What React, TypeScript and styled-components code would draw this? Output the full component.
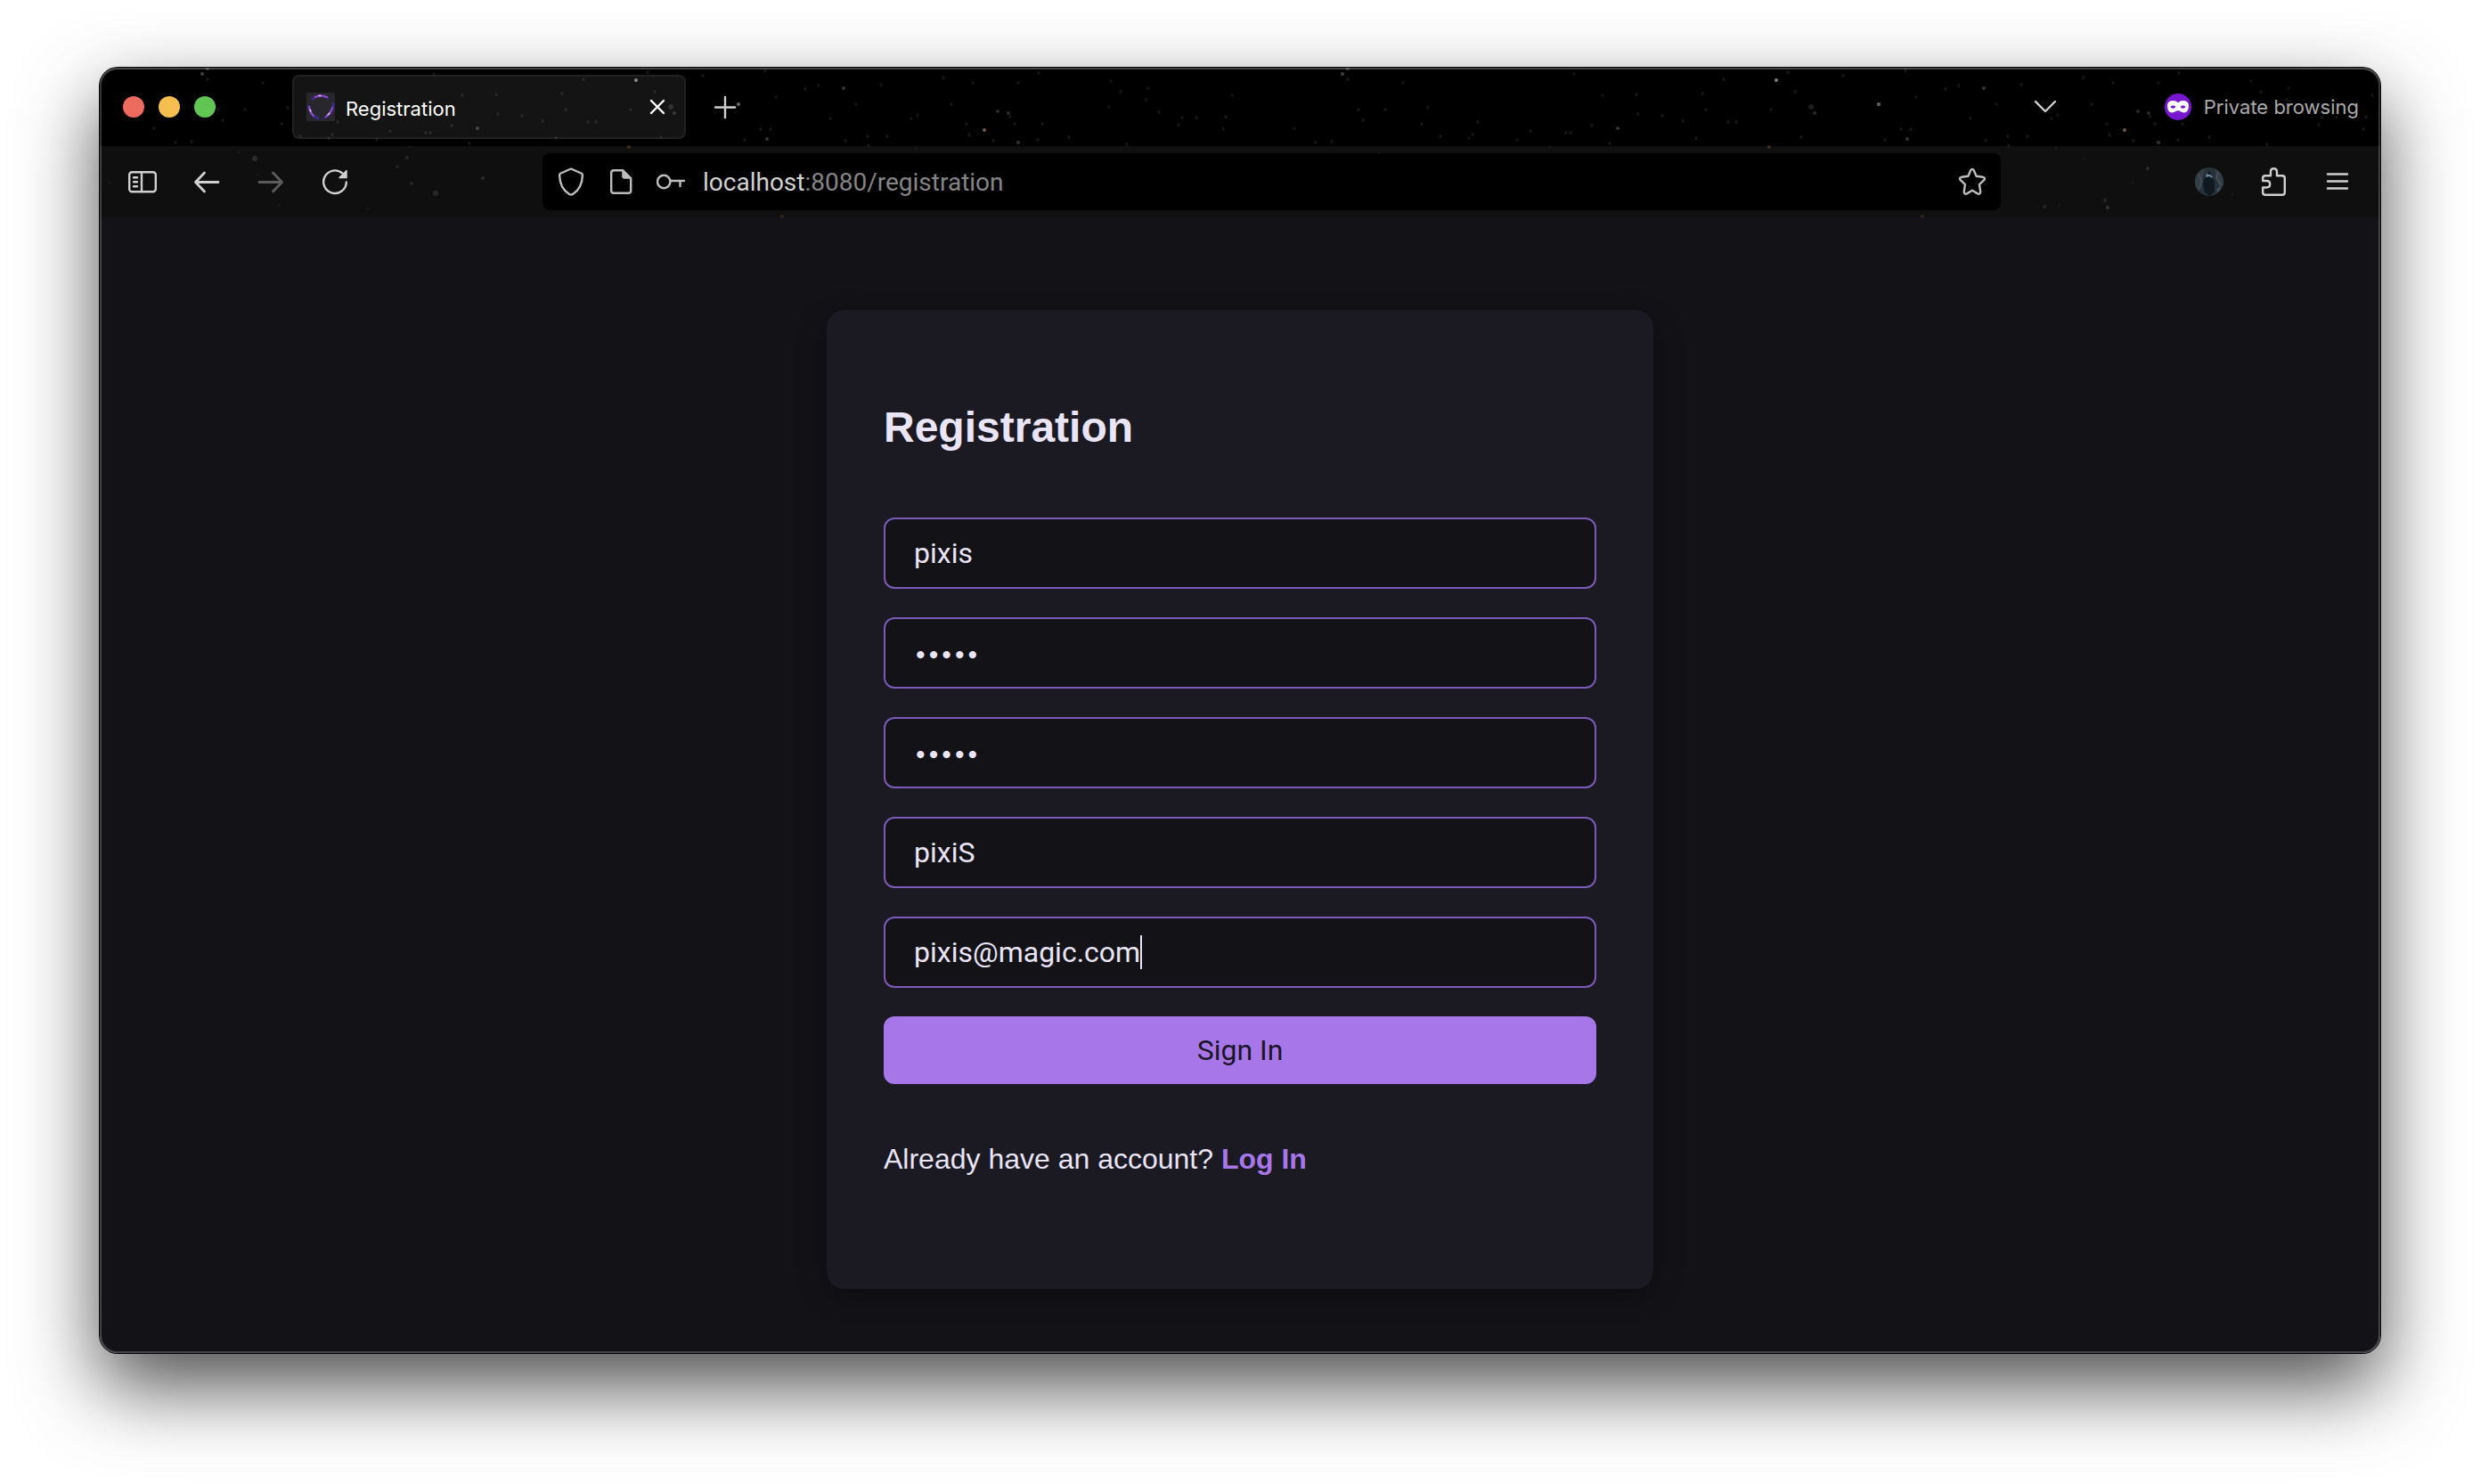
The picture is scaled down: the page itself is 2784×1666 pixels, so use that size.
import React from "react";
import styled, { createGlobalStyle } from "styled-components";

const ui = `Inter, "Noto Sans", sans-serif`;
const control = `Roboto, "Noto Sans", sans-serif`;
const body = `"Liberation Sans", Arial, sans-serif`;

const color = {
  page: "#131217",
  card: "#1b1922",
  text: "#e9e5f7",
  accent: "#a777ea",
  line: "#7b5ab9",
  icon: "#cfcfcf",
  iconMuted: "#bdbdbd",
};

const GlobalStyle = createGlobalStyle`
  *, *::before, *::after { box-sizing: border-box; }
  body { margin: 0; background: #fff; }
  button, input { font: inherit; color: inherit; }
`;

const Desktop = styled.div`
  display: flex;
  min-height: 100vh;
  padding: 76px 112px 148px;
  background: #fff;
`;

const Window = styled.div`
  position: relative;
  display: flex;
  flex: 1;
  flex-direction: column;
  min-width: 0;
  overflow: hidden;
  border-radius: 20px;
  background: ${color.page};
`;

const WindowFrame = styled.div`
  display: flex;
  flex: 1;
  min-width: 0;
  position: relative;
  border-radius: 20px;
  box-shadow: 0 0 0 1px #050505, 0 37px 88px rgba(0, 0, 0, 0.7);

  &::after {
    content: "";
    position: absolute;
    inset: 0;
    border-radius: 20px;
    box-shadow: inset 0 0 0 2px rgba(255, 255, 255, 0.2), inset 0 2px 0 rgba(255, 255, 255, 0.1);
    pointer-events: none;
  }
`;

const Chrome = styled.header`
  position: relative;
  isolation: isolate;
  background: #000;
  font-family: ${ui};
`;

const Sky = styled.svg`
  position: absolute;
  inset: 0;
  z-index: -1;
  width: 100%;
  height: 100%;
`;

const TabStrip = styled.div`
  display: flex;
  align-items: center;
  height: 88px;
  padding: 0 24px 0 26px;
`;

const Lights = styled.div`
  display: flex;
  gap: 16px;
  margin-right: 86px;
`;

const Light = styled.button<{ $fill: string }>`
  width: 24px;
  height: 24px;
  padding: 0;
  border: 0;
  border-radius: 50%;
  background: ${(p) => p.$fill};
`;

const Tab = styled.div`
  display: flex;
  align-items: center;
  gap: 12px;
  width: 442px;
  height: 72px;
  margin-right: 28px;
  padding: 0 14px;
  border: 2px solid rgba(255, 255, 255, 0.13);
  border-radius: 8px;
  background: rgba(255, 255, 255, 0.08);
  background-clip: padding-box;
`;

const TabTitle = styled.span`
  flex: 1;
  padding-top: 4px;
  color: #fff;
  font-size: 22px;
  line-height: 28px;
`;

const IconButton = styled.button<{ $color?: string }>`
  display: flex;
  flex: none;
  width: 32px;
  height: 32px;
  padding: 0;
  border: 0;
  background: none;
  color: ${(p) => p.$color ?? color.icon};
`;

const Spacer = styled.div`
  flex: 1;
`;

const PrivateBadge = styled.div`
  display: flex;
  align-items: center;
  gap: 14px;
  margin-left: 118px;
  color: #aaa;
  font-size: 22px;
  line-height: 28px;
`;

const NavBar = styled.nav`
  display: flex;
  align-items: center;
  height: 80px;
  padding: 0 32px;
  background: rgba(255, 255, 255, 0.06);
`;

const NavGroup = styled.div`
  display: flex;
  gap: 40px;
`;

const SiteGroup = styled.div`
  display: flex;
  gap: 24px;
`;

const AddressBar = styled.div`
  display: flex;
  flex: 1;
  align-items: center;
  gap: 20px;
  height: 64px;
  margin: 0 218px 0 217px;
  padding: 0 16px;
  border-radius: 8px;
  background: #000;
`;

const Address = styled.div`
  flex: 1;
  padding-top: 2px;
  color: #858585;
  font-family: ${control};
  font-size: 28px;
  line-height: 36px;
`;

const Host = styled.span`
  color: #d2d2d2;
`;

const Page = styled.main`
  display: flex;
  flex: 1;
  flex-direction: column;
  align-items: center;
  padding: 104px 32px 72px;
  color: ${color.text};
  font-family: ${body};
`;

const Card = styled.section`
  width: 100%;
  max-width: 928px;
  padding: 104px 64px 126px;
  border-radius: 20px;
  background: ${color.card};
  box-shadow: 0 8px 32px rgba(0, 0, 0, 0.3);
`;

const Title = styled.h1`
  margin: 0 0 73px;
  font-size: 48px;
  line-height: 56px;
`;

const Form = styled.form`
  display: flex;
  flex-direction: column;
  gap: 32px;
`;

const Field = styled.div`
  display: flex;
  align-items: center;
  height: 80px;
  padding: 0 32px;
  border: 2px solid ${color.line};
  border-radius: 12px;
  background: ${color.page};
`;

const Input = styled.input<{ $hug?: boolean }>`
  ${(p) => (p.$hug ? "field-sizing: content;" : "flex: 1;")}
  min-width: 0;
  padding: 0;
  border: 0;
  outline: 0;
  background: none;
  font-family: ${control};
  font-size: 32px;
  line-height: 40px;

  &[type="password"] {
    padding-top: 2px;
    font-family: ${ui};
    font-size: 26px;
  }
`;

const Caret = styled.span`
  width: 2px;
  height: 38px;
  background: ${color.text};
`;

const Submit = styled.button`
  height: 76px;
  padding: 0;
  border: 0;
  border-radius: 12px;
  background: ${color.accent};
  color: #1b1528;
  font-family: ${control};
  font-size: 32px;
  line-height: 40px;
`;

const Hint = styled.p`
  margin: 64px 0 0;
  font-size: 32px;
  line-height: 40px;
`;

const HintLink = styled.a`
  color: ${color.accent};
  font-weight: 700;
  text-decoration: none;
`;

/* Star field: x, y, radius, opacity, optional tint. The tile repeats every 1280px. */
type Star = [number, number, number, number, string?];

const brightStars: Star[] = [
  [115, 7, 2, 0.25], [121, 1, 2, 0.2], [602, 14, 2, 0.5], [717, 41, 2, 0.4],
  [993, 70, 2, 0.5, "#d8b0a0"], [594, 89, 2, 0.3, "#b0663c"], [174, 102, 3, 0.12],
  [424, 68, 2, 0.2], [835, 23, 2, 0.2], [749, 80, 2, 0.2], [1008, 49, 2, 0.16],
  [1020, 51, 2, 0.16], [1031, 84, 2, 0.2], [641, 44, 3, 0.12], [645, 51, 2, 0.16],
  [430, 124, 2, 0.12], [350, 130, 2, 0.12, "#d8c0a0"], [377, 141, 3, 0.1],
  [1019, 113, 2, 0.12], [903, 156, 2, 0.2, "#b0663c"], [971, 149, 2, 0.1], [974, 157, 2, 0.16],
  [334, 111, 2, 0.1, "#d8a0a0"], [345, 101, 2, 0.1], [766, 167, 2, 0.2, "#b0863c"],
];

const faintStars: number[][] = [
  [121, 13], [183, 17], [133, 47], [163, 47], [138, 59], [61, 68], [204, 63], [211, 45], [103, 83],
  [85, 84], [375, 7], [407, 31], [445, 30], [267, 61], [261, 75], [257, 79], [225, 77], [311, 81],
  [348, 89], [395, 65], [415, 85], [366, 73], [371, 73], [447, 52], [474, 54], [326, 71], [177, 120],
  [301, 158], [156, 95], [11, 129], [201, 154], [615, 5], [543, 13], [519, 29], [623, 27], [523, 47],
  [596, 47], [497, 60], [548, 61], [557, 61], [630, 78], [512, 79], [677, 9], [747, 3], [792, 24],
  [807, 20], [877, 19], [947, 11], [980, 17], [1054, 6], [1031, 17], [759, 33], [742, 69], [753, 69],
  [724, 81], [820, 57], [849, 41], [911, 57], [918, 53], [956, 41], [1022, 55], [1027, 63], [1058, 63],
  [973, 63], [976, 75], [1003, 82], [1053, 81], [862, 77], [837, 82], [884, 77], [863, 87], [1088, 78],
  [1133, 44], [1175, 36], [1146, 27], [1177, 23], [1271, 31], [1189, 50], [1215, 56], [1231, 56],
  [1211, 64], [1261, 69], [1264, 55], [1153, 86], [1135, 15], [920, 155], [947, 102], [1002, 129],
  [1114, 142], [916, 91],
];

const StarField = () => (
  <Sky aria-hidden="true">
    <defs>
      <pattern id="stars" width="1280" height="168" patternUnits="userSpaceOnUse">
        {faintStars.map(([x, y]) => (
          <ellipse key={`${x}-${y}`} cx={x} cy={y} rx="1.5" ry="2" fill="#fff" opacity={y > 88 ? 0.04 : 0.09} />
        ))}
        {brightStars.map(([x, y, r, o, tint]) => (
          <circle key={`${x}-${y}`} cx={x} cy={y} r={r} fill={tint ?? "#fff"} opacity={o} />
        ))}
      </pattern>
    </defs>
    <rect width="100%" height="100%" fill="url(#stars)" />
  </Sky>
);

const Glyph = ({ children, size = 32 }: { children: React.ReactNode; size?: number }) => (
  <svg
    width={size}
    height={size}
    viewBox="0 0 32 32"
    fill="none"
    stroke="currentColor"
    strokeWidth="2.4"
    strokeLinecap="round"
    strokeLinejoin="round"
    aria-hidden="true"
  >
    {children}
  </svg>
);

const Favicon = () => (
  <svg width="32" height="32" viewBox="0 0 32 32" fill="none" aria-hidden="true">
    <defs>
      <pattern id="check" width="2" height="2" patternUnits="userSpaceOnUse">
        <rect width="2" height="2" fill="#1d1c20" />
        <rect width="1" height="1" fill="#333238" />
        <rect x="1" y="1" width="1" height="1" fill="#333238" />
      </pattern>
    </defs>
    <rect width="32" height="32" fill="url(#check)" />
    <g strokeLinecap="round">
      <path d="M7 7Q15 0 24 6" stroke="#3c2a86" strokeWidth="3" />
      <path d="M3 15Q3 25 13 29" stroke="#3c2a86" strokeWidth="3" />
      <path d="M30 12Q31 22 21 28" stroke="#3c2a86" strokeWidth="3" />
      <path d="M10 5Q16 2 23 5" stroke="#8f4fc4" strokeWidth="2" />
      <path d="M3 16Q4 22 8 26" stroke="#8f4fc4" strokeWidth="2" />
      <path d="M29 17Q27 23 22 27" stroke="#8f4fc4" strokeWidth="2" />
      <path d="M14 3.500H16M4 19L5 21M26 23L24 25" stroke="#e9c8ff" strokeWidth="1.300" />
    </g>
  </svg>
);

const MaskIcon = () => (
  <svg width="30" height="30" viewBox="0 0 30 30" aria-hidden="true">
    <circle cx="15" cy="15" r="15" fill="#7717d0" />
    <path
      fill="#fff"
      fillRule="evenodd"
      d="M15 10.200C12.800 8.300 9.600 7.800 7 8.300C4.200 8.800 3.100 11 3.100 14C3.100 18.500 5 21.500 8.300 21.500C11.300 21.500 12.700 19.300 15 19.300C17.300 19.300 18.700 21.500 21.700 21.500C25 21.500 26.900 18.500 26.900 14C26.900 11 25.800 8.800 23 8.300C20.400 7.800 17.200 8.300 15 10.200ZM6.500 15C7.500 13.300 11 12.800 12.300 15C11.200 17.200 7.800 17.200 6.500 15ZM17.700 15C19 12.800 22.500 13.300 23.500 15C22.200 17.200 18.800 17.200 17.700 15Z"
    />
  </svg>
);

const Avatar = () => (
  <svg width="32" height="32" viewBox="0 0 32 32" aria-hidden="true">
    <defs>
      <clipPath id="round"><circle cx="16" cy="16" r="16" /></clipPath>
    </defs>
    <g clipPath="url(#round)">
      <rect width="32" height="32" fill="#26313a" />
      <path d="M0 0H11L8 14L3 32H0ZM22 0H32V26L25 16Z" fill="#343e45" />
      <path d="M4 8L8 16L5 24M26 5L24 12L29 20" stroke="#46525b" strokeWidth="1.500" fill="none" />
      <path d="M16 4L11 11L9 18L11 28L17 32L22 27L22 16L19 10Z" fill="#101820" />
      <path d="M13 7L19 9L20 12L16 10L12 11Z" fill="#6d87a0" />
      <path d="M24 25L28 21L29 24L25 28Z" fill="#41515f" />
    </g>
  </svg>
);

const fields = [
  { name: "username", label: "Username", type: "text", value: "pixis" },
  { name: "password", label: "Password", type: "password", value: "pixis" },
  { name: "confirm", label: "Confirm password", type: "password", value: "pixis" },
  { name: "nickname", label: "Nickname", type: "text", value: "pixiS" },
  { name: "email", label: "Email", type: "text", value: "pixis@magic.com", active: true },
];

export default function App() {
  return (
    <Desktop>
      <GlobalStyle />
      <WindowFrame>
        <Window>
          <Chrome>
            <StarField />
            <TabStrip>
              <Lights>
                <Light type="button" aria-label="Close window" $fill="#ec6a5e" />
                <Light type="button" aria-label="Minimize window" $fill="#f4bf4f" />
                <Light type="button" aria-label="Zoom window" $fill="#61c554" />
              </Lights>
              <Tab>
                <Favicon />
                <TabTitle>Registration</TabTitle>
                <IconButton type="button" aria-label="Close tab" $color="#fff">
                  <Glyph><path d="M9 9L23 23M23 9L9 23" /></Glyph>
                </IconButton>
              </Tab>
              <IconButton type="button" aria-label="New tab">
                <Glyph><path d="M16 5V28M5 16.500H27" /></Glyph>
              </IconButton>
              <Spacer />
              <IconButton type="button" aria-label="List all tabs">
                <Glyph><path d="M5 10L16 21L27 10" /></Glyph>
              </IconButton>
              <PrivateBadge>
                <MaskIcon />
                Private browsing
              </PrivateBadge>
            </TabStrip>
            <NavBar>
              <NavGroup>
                <IconButton type="button" aria-label="Sidebar">
                  <Glyph>
                    <rect x="1.2" y="5.2" width="29.600" height="22" rx="3" />
                    <path d="M15 5.200V27M6 11.200H10M6 16.200H10M6 21.200H10" />
                  </Glyph>
                </IconButton>
                <IconButton type="button" aria-label="Back">
                  <Glyph><path d="M13.500 6L3.500 16.500L13.500 27M3.500 16.500H29" strokeWidth="2.800" /></Glyph>
                </IconButton>
                <IconButton type="button" aria-label="Forward" $color="#5c5c5c">
                  <Glyph><path d="M18.500 6L28.500 16.500L18.500 27M28.500 16.500H3" strokeWidth="2.800" /></Glyph>
                </IconButton>
                <IconButton type="button" aria-label="Reload">
                  <Glyph>
                    <path d="M28.800 16.500A12.800 12.800 0 1 1 24.500 6.600" />
                    <path d="M29 3.500V11.500H21Z" fill="currentColor" strokeWidth="1.500" />
                  </Glyph>
                </IconButton>
              </NavGroup>
              <AddressBar>
                <SiteGroup>
                  <IconButton type="button" aria-label="Tracking protection" $color={color.iconMuted}>
                    <Glyph>
                      <path d="M16 1.500L27.500 6.500Q29 7.200 28.900 9Q28.500 23.500 18 30Q16 31.200 14 30Q3.500 23.500 3.100 9Q3 7.200 4.500 6.500Z" />
                    </Glyph>
                  </IconButton>
                  <IconButton type="button" aria-label="Site information" $color={color.iconMuted}>
                    <Glyph>
                      <path d="M18 3.200H8Q5.200 3.200 5.200 6V26Q5.200 28.800 8 28.800H24.500Q27.200 28.800 27.200 26V12Z" />
                      <path d="M18 3.200V10Q18 12 20 12H27.200Z" fill="currentColor" strokeWidth="1.500" />
                    </Glyph>
                  </IconButton>
                  <IconButton type="button" aria-label="Saved logins" $color={color.iconMuted}>
                    <Glyph>
                      <circle cx="8.200" cy="16" r="7.200" />
                      <path d="M15.500 15H31M26.500 15V21" />
                    </Glyph>
                  </IconButton>
                </SiteGroup>
                <Address><Host>localhost</Host>:8080/registration</Address>
                <IconButton type="button" aria-label="Bookmark this page" $color={color.iconMuted}>
                  <Glyph>
                    <path d="M14.200 3.200Q16 0.500 17.800 3.200L20.600 9.800L28 10.800Q31.300 11.600 29.200 14.200L24 19.200L25.200 27Q25.300 30.600 22 29.400L16 25.800L10 29.400Q6.700 30.600 6.800 27L8 19.200L2.800 14.200Q0.700 11.600 4 10.800L11.400 9.800Z" />
                  </Glyph>
                </IconButton>
              </AddressBar>
              <NavGroup>
                <IconButton type="button" aria-label="Account"><Avatar /></IconButton>
                <IconButton type="button" aria-label="Extensions">
                  <Glyph>
                    <path d="M4.200 15V12Q4.200 9.200 7 9.200H13V5Q13 1.200 16.500 1.200Q20 1.200 20 5V9.200H26Q28.800 9.200 28.800 12V28Q28.800 30.800 26 30.800H7Q4.200 30.800 4.200 28V22.500H8.500Q12.200 22.500 12.200 18.800Q12.200 15 8.500 15Z" />
                  </Glyph>
                </IconButton>
                <IconButton type="button" aria-label="Application menu">
                  <Glyph><path d="M5 7.500H27M5 15.500H27M5 23.500H27" /></Glyph>
                </IconButton>
              </NavGroup>
            </NavBar>
          </Chrome>
          <Page>
            <Card>
              <Title>Registration</Title>
              <Form onSubmit={(e) => e.preventDefault()}>
                {fields.map((f) => (
                  <Field key={f.name}>
                    <Input
                      type={f.type}
                      name={f.name}
                      aria-label={f.label}
                      defaultValue={f.value}
                      autoComplete="off"
                      spellCheck={false}
                      $hug={f.active}
                    />
                    {f.active && <Caret />}
                  </Field>
                ))}
                <Submit type="submit">Sign In</Submit>
              </Form>
              <Hint>
                Already have an account? <HintLink href="#login">Log In</HintLink>
              </Hint>
            </Card>
          </Page>
        </Window>
      </WindowFrame>
    </Desktop>
  );
}
